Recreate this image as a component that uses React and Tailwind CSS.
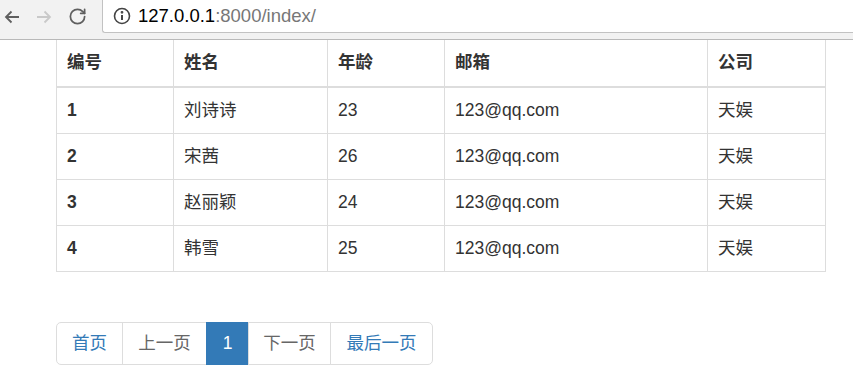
import { RotateCw } from 'lucide-react';

const people = [
  { id: 1, name: '刘诗诗', age: 23, email: '123@qq.com', company: '天娱' },
  { id: 2, name: '宋茜', age: 26, email: '123@qq.com', company: '天娱' },
  { id: 3, name: '赵丽颖', age: 24, email: '123@qq.com', company: '天娱' },
  { id: 4, name: '韩雪', age: 25, email: '123@qq.com', company: '天娱' },
];

const columns = [
  { label: '编号', width: 'w-[117px]' },
  { label: '姓名', width: 'w-[154px]' },
  { label: '年龄', width: 'w-[117px]' },
  { label: '邮箱', width: 'w-[263px]' },
  { label: '公司', width: 'w-[118px]' },
];

const pages = [
  { label: '首页', width: 'w-[67px]', tone: 'text-[#337ab7]' },
  { label: '上一页', width: 'w-[85px]', tone: 'text-[#666]' },
  { label: '1', width: 'w-[43px]', active: true },
  { label: '下一页', width: 'w-[83px]', tone: 'text-[#666]' },
  { label: '最后一页', width: 'w-[103px]', tone: 'text-[#337ab7]' },
];

function Toolbar() {
  return (
    <div className="h-[40px] shrink-0 bg-[#f2f2f2] border-b border-[#b9b9b9] flex items-start">
      <div className="h-[33px] w-[102px] flex items-center">
        <svg className="ml-[3px]" width="18" height="18" viewBox="0 0 18 18" fill="none" stroke="#5f5f5f" strokeWidth="1.8">
          <path d="M16 9H3M8.5 3.5 3 9l5.5 5.5" />
        </svg>
        <svg className="ml-[14px]" width="18" height="18" viewBox="0 0 18 18" fill="none" stroke="#c9c9c9" strokeWidth="1.8">
          <path d="M2 9h13M9.5 3.5 15 9l-5.5 5.5" />
        </svg>
        <RotateCw className="ml-[15px]" size={19} color="#5f5f5f" strokeWidth={2.2} />
      </div>
      <div className="h-[33px] flex-1 bg-white border-l border-b border-[#c2c2c2] rounded-bl-[3px] flex items-center pl-[10px]">
        <svg width="18" height="18" viewBox="0 0 18 18" fill="none" stroke="#444" strokeWidth="1.6">
          <circle cx="9" cy="9" r="7.5" />
          <path d="M9 8v5" strokeWidth="2" />
          <circle cx="9" cy="5.3" r="0.6" fill="#444" />
        </svg>
        <span className="ml-[7px] text-[18.5px] leading-none font-['Liberation_Sans',Arial,sans-serif]">
          <span className="text-black">127.0.0.1</span>
          <span className="text-[#777]">:8000/index/</span>
        </span>
      </div>
    </div>
  );
}

export default function App() {
  return (
    <div className="w-[853px] h-[376px] overflow-hidden bg-white flex flex-col text-[#333] font-['Liberation_Sans','Noto_Sans_CJK_SC',sans-serif]">
      <Toolbar />

      <div className="pl-[56px]">
        <table className="table-fixed border-collapse w-[769px] text-[17.5px] leading-[25px]">
          <thead>
            <tr>
              {columns.map((col) => (
                <th
                  key={col.label}
                  className={`${col.width} text-left font-bold px-[10px] pt-[10px] pb-[11px] border-x border-[#ddd] border-b-2 border-t-0`}
                >
                  {col.label}
                </th>
              ))}
            </tr>
          </thead>
          <tbody>
            {people.map((p) => (
              <tr key={p.id}>
                <td className="px-[10px] py-[10px] border border-[#ddd] font-bold">{p.id}</td>
                <td className="px-[10px] py-[10px] border border-[#ddd]">{p.name}</td>
                <td className="px-[10px] py-[10px] border border-[#ddd]">{p.age}</td>
                <td className="px-[10px] py-[10px] border border-[#ddd]">{p.email}</td>
                <td className="px-[10px] py-[10px] border border-[#ddd]">{p.company}</td>
              </tr>
            ))}
          </tbody>
        </table>

        <nav className="mt-[50px] flex">
          {pages.map((page, i) => (
            <span
              key={page.label}
              className={[
                page.width,
                'h-[43px] flex items-center justify-center text-[17.5px] leading-[25px]',
                page.active
                  ? 'bg-[#337ab7] text-white border border-[#337ab7]'
                  : `${page.tone} bg-white border border-[#ddd]`,
                i > 0 ? '-ml-px' : 'rounded-l-[5px]',
                i === pages.length - 1 ? 'rounded-r-[5px]' : '',
              ].join(' ')}
            >
              {page.label}
            </span>
          ))}
        </nav>
      </div>
    </div>
  );
}
